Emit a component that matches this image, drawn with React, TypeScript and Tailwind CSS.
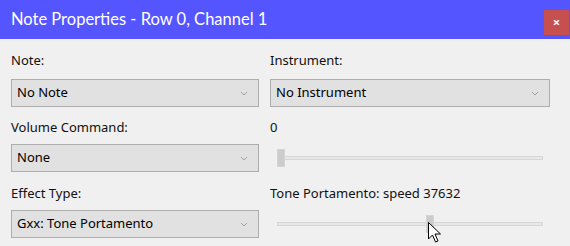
import React from 'react';

const font = { fontFamily: '"Noto Sans", "Open Sans", sans-serif' };

const Chevron = () => (
  <svg width="8" height="5" viewBox="0 0 8 5" className="shrink-0">
    <path d="M1 1 L4 4 L7 1" fill="none" stroke="#a0a0a0" strokeWidth="1" />
  </svg>
);

const Select = ({ value }: { value: string }) => (
  <div className="h-[28px] w-full bg-[#e1e1e1] border border-[#adadad] flex items-center justify-between pl-[5px] pr-[10px] text-[13px] text-black">
    <span>{value}</span>
    <Chevron />
  </div>
);

const Label = ({ children }: { children: React.ReactNode }) => (
  <div className="h-[20px] flex items-center text-[13px] text-[#111] pt-[2px]">{children}</div>
);

const Slider = ({ pos }: { pos: number }) => (
  <div className="relative h-[28px] mx-[7px]">
    <div className="absolute left-0 right-0 top-1/2 -translate-y-1/2 h-[4px] bg-[#e7e7e7] border border-[#d6d6d6]" />
    <div
      className="absolute top-1/2 -translate-y-1/2 w-[8px] h-[18px] bg-[#cccccc] border border-[#d4d4d4]"
      style={{ left: pos }}
    />
  </div>
);

export default function App() {
  return (
    <div className="w-[570px] h-[246px] bg-[#f0f0f0] overflow-hidden relative" style={font}>
      <div className="h-[39px] bg-[#5555ff] flex items-center justify-between pl-[11px] pr-[1px]">
        <span className="text-white text-[16.5px]" style={{ fontFamily: 'Lato, "Noto Sans", sans-serif' }}>
          Note Properties - Row 0, Channel 1
        </span>
        <button className="w-[25px] h-[25px] mt-[6px] bg-[#c65050] text-white flex items-center justify-center text-[13px] font-bold">
          ×
        </button>
      </div>
      <div className="grid grid-cols-[248px_280px] gap-x-[11px] px-[11px] pt-[11px]">
        <div className="flex flex-col">
          <Label>Note:</Label>
          <div className="mt-[9px]"><Select value="No Note" /></div>
          <div className="mt-[10px]"><Label>Volume Command:</Label></div>
          <div className="mt-[7px]"><Select value="None" /></div>
          <div className="mt-[11px]"><Label>Effect Type:</Label></div>
          <div className="mt-[7px]"><Select value="Gxx: Tone Portamento" /></div>
        </div>
        <div className="flex flex-col">
          <Label>Instrument:</Label>
          <div className="mt-[9px]"><Select value="No Instrument" /></div>
          <div className="mt-[10px]"><Label>0</Label></div>
          <div className="mt-[7px]"><Slider pos={0} /></div>
          <div className="mt-[11px]"><Label>Tone Portamento: speed 37632</Label></div>
          <div className="mt-[7px]"><Slider pos={149} /></div>
        </div>
      </div>
      <svg className="absolute left-[428px] top-[222px]" width="14" height="23" viewBox="0 0 14 23">
        <path d="M0.5 0.5 L0.5 17 L4.5 13 L7.5 20 L10 19 L7 12 L12.5 12 Z" fill="#fff" stroke="#000" strokeWidth="1" strokeLinejoin="miter" />
      </svg>
    </div>
  );
}
